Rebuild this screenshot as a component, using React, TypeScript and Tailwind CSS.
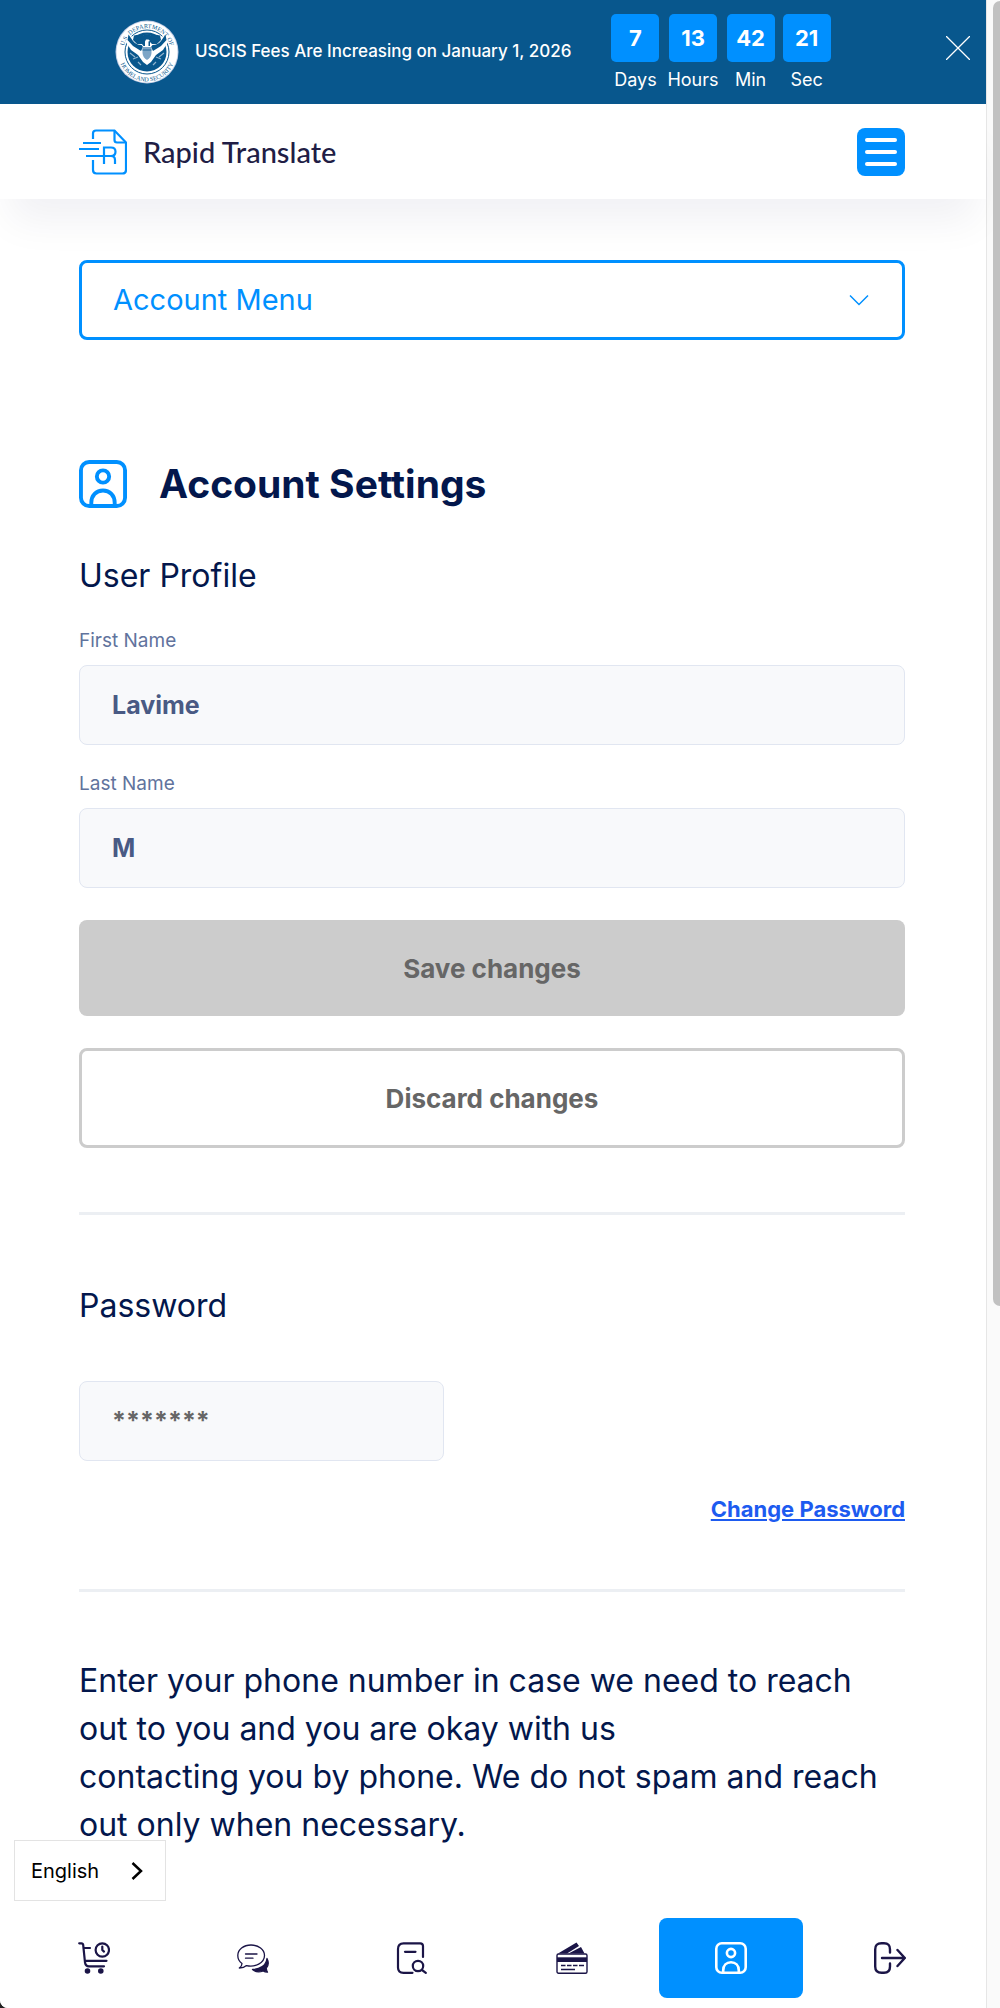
import React, { useState } from "react";

type IconProps = { className?: string };

const Seal = () => (
  <svg viewBox="0 0 64 64" className="size-16 shrink-0" role="img" aria-label="U.S. Department of Homeland Security">
    <defs>
      <path id="seal-top" d="M8.700 38A24 24 0 1 1 55.300 38" />
      <path id="seal-bottom" d="M3.500 33A28.500 28.500 0 0 0 60.500 33" />
    </defs>
    <circle cx="32" cy="32" r="31.5" fill="#c3cfe6" />
    <circle cx="32" cy="32" r="30.5" fill="#fff" />
    <circle cx="32" cy="32" r="22" fill="none" stroke="#08578d" strokeWidth="1" />
    <circle cx="32" cy="32" r="19.500" fill="#08578d" />
    <g fill="#08578d" fontFamily="Liberation Serif, serif" fontSize="6.2" fontWeight="400">
      <text textAnchor="middle">
        <textPath href="#seal-top" startOffset="50%">U.S. DEPARTMENT OF</textPath>
      </text>
      <text textAnchor="middle">
        <textPath href="#seal-bottom" startOffset="50%">HOMELAND SECURITY</textPath>
      </text>
    </g>
    <path d="M13 15L19 17.500Q23 20 25 19L28 16Q32 13.500 36 16L39 19Q41 20 45 17.500L51 15L53 22L48 30L41 35L36 42L32 45L28 42L23 35L16 30L11 22Z" fill="#fff" />
    <path d="M13.500 14.500L18 21Q21 25 26.500 25L28 27L26 31L18 26L12.500 20ZM50.500 14.500L46 21Q43 25 37.500 25L36 27L38 31L46 26L51.500 20Z" fill="#08578d" />
    <path d="M19 15.500Q24 14 28 15.500Q32 13 36 15.500Q40 14 45 15.500L46 20L42 24H37L35 22V26H33.500V21.500L35 21L33.500 19.500H31L30 21.500V26H28.500L27 24H22L18 20Z" fill="#08578d" />
    <path d="M27.500 27H36.500V33Q36 38 32 40Q28 38 27.500 33Z" fill="#7ca5c6" />
    <path d="M27.500 30H36.500" stroke="#08578d" strokeWidth=".8" />
    <path d="M15 33L20 37M18 39L23 37M49 33L44 37M46 39L41 37M23 42L26 45M41 42L38 45" stroke="#8fb3ce" strokeWidth="1.2" />
  </svg>
);

const LogoMark = () => (
  <svg viewBox="0 0 48 46" className="h-[46px] w-12 shrink-0" fill="none" stroke="#0090ff" strokeWidth="2.2" strokeLinecap="butt" aria-hidden="true">
    <path d="M14 10V4.5Q14 1.500 17 1.500H35.500L47 13.500V41Q47 44.500 43.500 44.500H17.500Q14 44.500 14 41V31" />
    <path d="M35.500 1.500V11Q35.500 13.500 38 13.500H47" />
    <path d="M4 14H22M0 20H20M7 27H32" />
    <path d="M25 35V18.500H32Q36.500 18.500 36.500 22.700T32 27Q36 27 36 31V35" />
  </svg>
);

const ProfileIcon = ({ className }: IconProps) => (
  <svg viewBox="0 0 32 32" className={className} fill="none" stroke="currentColor" strokeWidth="2.600" aria-hidden="true">
    <rect x="1.300" y="1.300" width="29.400" height="29.400" rx="5.500" />
    <circle cx="16" cy="11" r="4.100" />
    <path d="M8.200 30.500V28.500C8.200 23.500 11.500 20.300 16 20.300S23.800 23.500 23.800 28.500V30.500" />
  </svg>
);

const CartIcon = ({ className }: IconProps) => (
  <svg viewBox="0 0 32 32" className={className} fill="none" stroke="currentColor" strokeWidth="2.200" strokeLinecap="round" strokeLinejoin="round" aria-hidden="true">
    <path d="M1.200 1.300H3.500Q5 1.300 5.200 3L7 20.500Q7.600 24.300 11 24.300H26" />
    <path d="M6 6H12M8 18.800H28.500" />
    <circle cx="24.300" cy="8" r="6.700" />
    <path d="M24.300 4.500V8L26 9.600" />
    <circle cx="9.500" cy="29" r="1.700" fill="currentColor" />
    <circle cx="22.800" cy="29" r="1.700" fill="currentColor" />
  </svg>
);

const ChatIcon = ({ className }: IconProps) => (
  <svg viewBox="0 0 32 32" className={className} fill="none" stroke="currentColor" strokeWidth="1.300" strokeLinecap="round" strokeLinejoin="round" aria-hidden="true">
    <path d="M14 3C6.500 3 .8 7.800 .8 13.500C.8 17 2.500 19.800 5 21.500C5 23.500 3.800 25 2.300 26C5.500 26 8 25 9.500 23.600C18 25.500 27.500 21 27.500 13.500C27.500 7.800 21.500 3 14 3Z" />
    <path d="M8.500 12H20M8.500 16.200H16" />
    <path d="M30 16.500C31.800 20 31.600 23.500 29.300 26.200C29.400 28 30 29.300 30.500 30.200C28.500 30.200 27.300 29.800 26.300 29C22 30.500 18 29.800 15.500 27.500C23 27.500 29 23.500 30 16.500Z" fill="currentColor" />
  </svg>
);

const DocumentSearchIcon = ({ className }: IconProps) => (
  <svg viewBox="0 0 32 32" className={className} fill="none" stroke="currentColor" strokeWidth="2.200" strokeLinecap="round" strokeLinejoin="round" aria-hidden="true">
    <path d="M27 15V4Q27 1.300 24.300 1.300H7.500Q2 1.300 2 7V25.500Q2 30.800 7.500 30.800H16.500" />
    <path d="M9 9.800H19.500" />
    <circle cx="22" cy="24" r="5.200" />
    <path d="M26 28L29.800 30.800" />
  </svg>
);

const CardsIcon = ({ className }: IconProps) => (
  <svg viewBox="0 0 32 32" className={className} aria-hidden="true">
    <path d="M2 11.500L20.500 .5L23 4L11 11.500ZM12.500 11.500L25 5L28.500 11.500Z" fill="currentColor" />
    <rect x="1" y="12" width="30" height="19.300" rx="1.500" fill="none" stroke="currentColor" strokeWidth="1.400" />
    <path d="M1 15.300H31V20H1Z" fill="currentColor" />
    <path d="M5 23.500H9.500M11 23.500H15.500M17 23.500H21.500M23 23.500H28M5 27.500H19" stroke="currentColor" strokeWidth="1.700" />
  </svg>
);

const LogoutIcon = ({ className }: IconProps) => (
  <svg viewBox="0 0 32 32" className={className} fill="none" stroke="currentColor" strokeWidth="2.400" strokeLinecap="round" strokeLinejoin="round" aria-hidden="true">
    <path d="M16 10.500V7.500Q16 1.200 10 1.200H7.500Q1.200 1.200 1.200 7.500V24.500Q1.200 30.800 7.500 30.800H10Q16 30.800 16 24.500V21.500" />
    <path d="M8 16H30.800M23.500 8L30.800 16L23.500 24" />
  </svg>
);

const countdown = [
  { value: "7", unit: "Days" },
  { value: "13", unit: "Hours" },
  { value: "42", unit: "Min" },
  { value: "21", unit: "Sec" },
];

const navItems = [
  { label: "Orders", Icon: CartIcon, active: false },
  { label: "Messages", Icon: ChatIcon, active: false },
  { label: "Documents", Icon: DocumentSearchIcon, active: false },
  { label: "Payments", Icon: CardsIcon, active: false },
  { label: "Account", Icon: ProfileIcon, active: true },
  { label: "Log out", Icon: LogoutIcon, active: false },
];

function Banner() {
  return (
    <div className="relative flex h-[104px] items-center bg-[#08578d] pl-[115px] text-white">
      <Seal />
      <p className="ml-4 text-[17px] font-medium">USCIS Fees Are Increasing on January 1, 2026</p>
      <div className="ml-10 mt-3.5 flex gap-2 self-start">
        {countdown.map(({ value, unit }) => (
          <div key={unit} className="flex min-w-12 flex-col items-center">
            <span className="flex size-12 items-center justify-center rounded-[5px] bg-[#0090ff] text-[22px] font-bold">{value}</span>
            <span className="mt-1 text-lg leading-7">{unit}</span>
          </div>
        ))}
      </div>
      <button type="button" aria-label="Close banner" className="absolute right-4 top-9">
        <svg viewBox="0 0 24 24" className="size-6" stroke="#fff" strokeWidth="1.300" aria-hidden="true">
          <path d="M0 0L24 24M24 0L0 24" />
        </svg>
      </button>
    </div>
  );
}

function Header() {
  return (
    <header className="relative flex h-[95px] items-center justify-between bg-white pl-[79px] pr-[81px] shadow-[0_32px_40px_-10px_rgba(20,20,60,0.06)]">
      <a href="#home" className="flex items-center gap-4">
        <LogoMark />
        <span className="font-[Lato] text-[29px] font-medium text-[#211d45]">Rapid Translate</span>
      </a>
      <button type="button" aria-label="Open menu" className="flex size-12 flex-col items-center justify-center gap-2 rounded-lg bg-[#0090ff]">
        <span className="h-1 w-8 rounded-full bg-white" />
        <span className="h-1 w-8 rounded-full bg-white" />
        <span className="h-1 w-8 rounded-full bg-white" />
      </button>
    </header>
  );
}

function Field({ id, label, value, onChange }: { id: string; label: string; value: string; onChange: (v: string) => void }) {
  return (
    <div className="flex flex-col">
      <label htmlFor={id} className="mb-2 text-[19px] leading-8 text-[#61739d]">{label}</label>
      <input
        id={id}
        value={value}
        onChange={(e: React.ChangeEvent<HTMLInputElement>) => onChange(e.target.value)}
        className="h-20 w-full rounded-lg border border-[#e1e6f1] bg-[#f8f9fb] px-8 text-[25px] font-bold text-[#495a84] outline-none"
      />
    </div>
  );
}

function BottomNav() {
  return (
    <div className="sticky bottom-0 mt-auto">
      <button type="button" className="absolute bottom-[107px] left-3.5 flex h-[61px] w-[152px] items-center justify-between border border-[#e3e3e3] bg-white pl-4 pr-[22px] text-xl text-black">
        English
        <svg viewBox="0 0 12 18" className="h-[18px] w-3" fill="none" stroke="#000" strokeWidth="2.500" aria-hidden="true">
          <path d="M1.500 1L10 9L1.500 17" />
        </svg>
      </button>
      <nav className="grid grid-cols-6 gap-4 rounded-bl-lg bg-white pb-2.5 pl-[22px] pr-6 pt-2.5 text-[#1b1547]">
        {navItems.map(({ label, Icon, active }) => (
          <a
            key={label}
            href="#nav"
            aria-label={label}
            className={active ? "flex h-20 items-center justify-center rounded-lg bg-[#0090ff] text-white" : "flex h-20 items-center justify-center"}
          >
            <Icon className="size-8" />
          </a>
        ))}
      </nav>
    </div>
  );
}

export default function App() {
  const [firstName, setFirstName] = useState("Lavime");
  const [lastName, setLastName] = useState("M");

  return (
    <div className="flex min-h-screen bg-[#222222] font-[Inter,sans-serif]">
      <div className="flex min-w-0 flex-1 flex-col rounded-bl-lg bg-white">
        <Banner />
        <Header />
        <main className="flex flex-col pl-[79px] pr-[81px] pt-[61px] text-[#03174c]">
          <button type="button" className="relative flex h-20 items-center justify-between rounded-lg border-3 border-[#0090ff] bg-white pl-[31px] pr-[33px] text-[29px] text-[#0090ff]">
            Account Menu
            <svg viewBox="0 0 20 12" className="h-3 w-5" fill="none" stroke="currentColor" strokeWidth="1.500" aria-hidden="true">
              <path d="M1 1.500L10 10.500L19 1.500" />
            </svg>
          </button>

          <div className="mt-[120px] flex h-12 items-center gap-8">
            <ProfileIcon className="size-12 text-[#0090ff]" />
            <h1 className="text-[39px] font-bold">Account Settings</h1>
          </div>

          <form onSubmit={(e: React.FormEvent) => e.preventDefault()} className="flex flex-col">
            <h2 className="mt-11 text-[32px] leading-12">User Profile</h2>
            <div className="mt-[25px] flex flex-col gap-[23px]">
              <Field id="first-name" label="First Name" value={firstName} onChange={setFirstName} />
              <Field id="last-name" label="Last Name" value={lastName} onChange={setLastName} />
            </div>
            <button type="submit" disabled className="mt-8 h-24 rounded-lg bg-[#cccccc] text-[26px] font-bold text-[#666666]">
              Save changes
            </button>
            <button type="button" disabled className="mt-8 h-[100px] rounded-lg border-3 border-[#cccccc] text-[26px] font-bold text-[#666666]">
              Discard changes
            </button>
          </form>

          <hr className="mt-16 border-t-3 border-[#eceff3]" />

          <section className="flex flex-col">
            <h2 className="mt-[67px] text-[32px] leading-12">
              <label htmlFor="password">Password</label>
            </h2>
            <input
              id="password"
              value="*******"
              readOnly
              className="mt-[51px] h-20 w-[365px] rounded-lg border border-[#e1e6f1] bg-[#f8f9fb] px-8 text-[25px] font-bold text-[#666666] outline-none"
            />
            <a href="#change-password" className="mt-8 self-end text-[22px] font-bold leading-8 text-[#1d5bf0] underline">
              Change Password
            </a>
          </section>

          <hr className="mt-16 border-t-3 border-[#eceff3]" />

          <p className="mt-[65px] text-[32px] leading-12">
            Enter your phone number in case we need to reach out to you and you are okay with us
            <br />
            contacting you by phone. We do not spam and reach out only when necessary.
          </p>
        </main>
        <BottomNav />
      </div>

      <div className="w-3.5 shrink-0 border-l border-[#e6e6e6] bg-[#fafafa] pl-1.5 pt-px" aria-hidden="true">
        <div className="sticky top-px h-[65vh] rounded-l-full bg-[#c1c1c1]" />
      </div>
    </div>
  );
}
